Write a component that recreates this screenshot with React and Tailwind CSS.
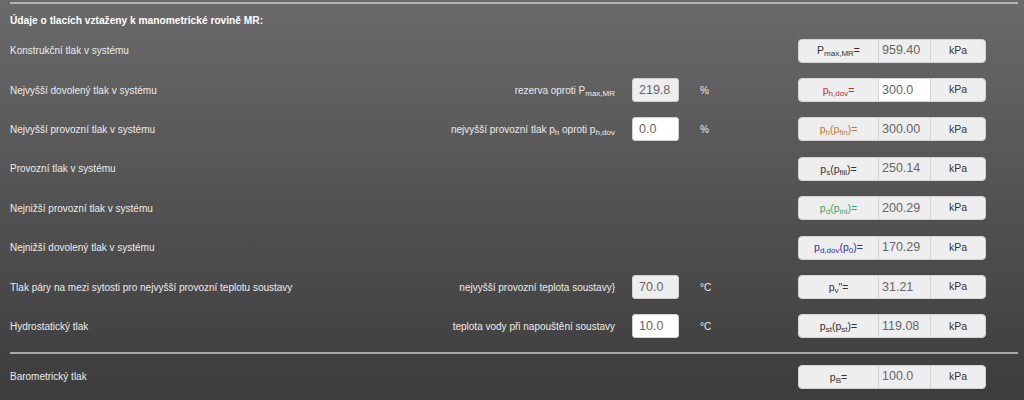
const rows = [
  {
    label: 'Konstrukční tlak v systému',
    sym: <>P<sub className="text-[8px]">max,MR</sub>=</>,
    symColor: 'text-[#333333]',
    value: '959.40',
  },
  {
    label: 'Nejvyšší dovolený tlak v systému',
    mid: <>rezerva oproti P<sub className="text-[8px]">max,MR</sub></>,
    input: '219.8',
    readOnly: true,
    unit: '%',
    sym: <>p<sub className="text-[8px]">h,dov</sub>=</>,
    symColor: 'text-[#c0302c]',
    value: '300.0',
    editable: true,
  },
  {
    label: 'Nejvyšší provozní tlak v systému',
    mid: <>nejvyšší provozní tlak p<sub className="text-[8px]">h</sub> oproti p<sub className="text-[8px]">h,dov</sub></>,
    input: '0.0',
    unit: '%',
    sym: <>p<sub className="text-[8px]">h</sub>(p<sub className="text-[8px]">fin</sub>)=</>,
    symColor: 'text-[#c07a30]',
    value: '300.00',
  },
  {
    label: 'Provozní tlak v systému',
    sym: <>p<sub className="text-[8px]">s</sub>(p<sub className="text-[8px]">fill</sub>)=</>,
    symColor: 'text-[#333333]',
    value: '250.14',
  },
  {
    label: 'Nejnižší provozní tlak v systému',
    sym: <>p<sub className="text-[8px]">d</sub>(p<sub className="text-[8px]">ini</sub>)=</>,
    symColor: 'text-[#3aa86a]',
    value: '200.29',
  },
  {
    label: 'Nejnižší dovolený tlak v systému',
    sym: <>p<sub className="text-[8px]">d,dov</sub>(p<sub className="text-[8px]">0</sub>)=</>,
    symColor: 'text-[#2f2fa8]',
    value: '170.29',
  },
  {
    label: 'Tlak páry na mezi sytosti pro nejvyšší provozní teplotu soustavy',
    mid: <>nejvyšší provozní teplota soustavy{'}'}</>,
    input: '70.0',
    readOnly: true,
    unit: '°C',
    sym: <>p<sub className="text-[8px]">v</sub>"=</>,
    symColor: 'text-[#333333]',
    value: '31.21',
  },
  {
    label: 'Hydrostatický tlak',
    mid: <>teplota vody při napouštění soustavy</>,
    input: '10.0',
    unit: '°C',
    sym: <>p<sub className="text-[8px]">st</sub>(p<sub className="text-[8px]">st</sub>)=</>,
    symColor: 'text-[#333333]',
    value: '119.08',
  },
]

const last = {
  label: 'Barometrický tlak',
  sym: <>p<sub className="text-[8px]">B</sub>=</>,
  symColor: 'text-[#333333]',
  value: '100.0',
}

function Row({ row }) {
  return (
    <div className="flex items-center h-[39.4px]">
      <div className="flex-1 text-[10px] text-[#ececec] whitespace-nowrap">{row.label}</div>
      {row.mid && (
        <>
          <div className="text-[10px] text-[#ececec] whitespace-nowrap text-right">{row.mid}</div>
          <div className={`ml-[17px] w-[47px] h-[24px] rounded-[3px] border border-[#d0d0d0] flex items-center pl-[6px] text-[12.5px] text-[#666666] ${
            row.readOnly ? 'bg-[#eeeeee]' : 'bg-white'
          }`}>
            {row.input}
          </div>
          <div className="w-[119px] pl-[21px] text-[10px] text-[#ececec]">{row.unit}</div>
        </>
      )}
      <div className="w-[188px] h-[24px] flex rounded-[4px] bg-[#eeeeee] border border-[#d4d4d4] overflow-hidden">
        <div className={`w-[79px] flex items-center justify-center text-[10.5px] leading-none ${row.symColor}`}>
          <span>{row.sym}</span>
        </div>
        <div className={`w-[53px] flex items-center pl-[3px] border-l border-r border-[#d4d4d4] text-[12.5px] text-[#666666] ${
          row.editable ? 'bg-white' : ''
        }`}>
          {row.value}
        </div>
        <div className="flex-1 flex items-center justify-center text-[10.5px] text-[#333333]">kPa</div>
      </div>
    </div>
  )
}

export default function App() {
  return (
    <div className="w-[1024px] h-[400px] overflow-hidden bg-linear-to-b from-[#6a6a6a] to-[#3c3c3c] font-['Liberation_Sans',Arial,sans-serif] pl-[10px] pr-[38px]">
      <div className="mt-[2px] h-[2px] bg-[#b4b4b4] mr-[-32px]" />
      <div className="h-[27px] pt-[10px] text-[10.2px] leading-[14px] font-bold text-white">
        Údaje o tlacích vztaženy k manometrické rovině MR:
      </div>
      {rows.map((r, i) => <Row key={i} row={r} />)}
      <div className="mt-[6px] h-[2px] bg-[#a8a8a8] mr-[-32px]" />
      <div className="mt-[3px]">
        <Row row={last} />
      </div>
    </div>
  )
}
